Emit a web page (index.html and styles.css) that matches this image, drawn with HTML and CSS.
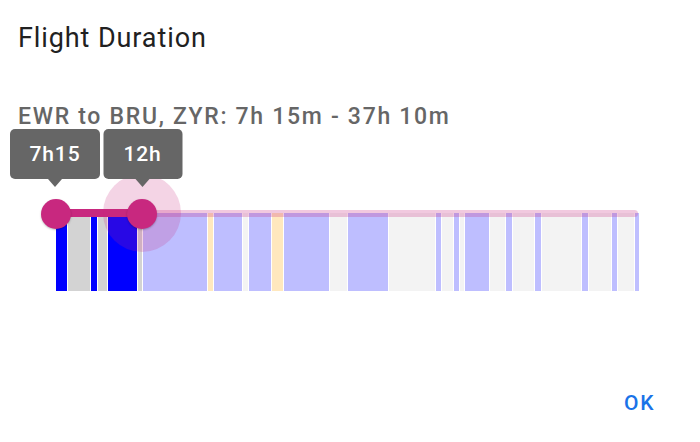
FILE: index.html
```html
<!DOCTYPE html>
<html>
<head>
  <title>Flight Duration</title>
  <link rel="stylesheet" href="styles.css">
</head>
<body>
  <div class="dialog">
    <h2 class="title">Flight Duration</h2>
    <p class="route">EWR to BRU, ZYR: 7h 15m - 37h 10m</p>

    <div class="range">
      <div class="bars">
        <div class="bar blue" style="width:12px"></div>
        <div class="bar gray" style="width:23px"></div>
        <div class="bar blue" style="width:7px"></div>
        <div class="bar gray" style="width:10px"></div>
        <div class="bar blue" style="width:30px"></div>
        <div class="bar gray" style="width:5px"></div>
        <div class="bar blue out" style="width:65px"></div>
        <div class="bar orange out" style="width:6px"></div>
        <div class="bar blue out" style="width:29px"></div>
        <div class="bar gray out" style="width:6px"></div>
        <div class="bar blue out" style="width:23px"></div>
        <div class="bar orange out" style="width:12px"></div>
        <div class="bar blue out" style="width:46px"></div>
        <div class="bar gray out" style="width:18px"></div>
        <div class="bar blue out" style="width:41px"></div>
        <div class="bar gray out" style="width:47px"></div>
        <div class="bar blue out" style="width:6px"></div>
        <div class="bar gray out" style="width:12px"></div>
        <div class="bar blue out" style="width:6px"></div>
        <div class="bar gray out" style="width:5px"></div>
        <div class="bar blue out" style="width:25px"></div>
        <div class="bar gray out" style="width:16px"></div>
        <div class="bar blue out" style="width:7px"></div>
        <div class="bar gray out" style="width:22px"></div>
        <div class="bar blue out" style="width:7px"></div>
        <div class="bar gray out" style="width:40px"></div>
        <div class="bar blue out" style="width:7px"></div>
        <div class="bar gray out" style="width:23px"></div>
        <div class="bar blue out" style="width:6px"></div>
        <div class="bar gray out" style="width:17px"></div>
        <div class="bar blue out last" style="width:4px"></div>
      </div>

      <!-- slider drawn over the histogram -->
      <div class="track"></div>
      <div class="track-active" style="width:86px"></div>
      <div class="halo" style="left:86px"></div>
      <div class="thumb" style="left:0px"></div>
      <div class="thumb" style="left:86px"></div>
      <div class="tip tip-min" style="left:0px">7h15</div>
      <div class="tip tip-max" style="left:86px">12h</div>
    </div>

    <div class="actions">
      <button class="okbtn">OK</button>
    </div>
  </div>
</body>
</html>
```

FILE: styles.css
```css
* {box-sizing: border-box}
body {
  margin: 0;
  background: #fff;
  font-family: Roboto, "Liberation Sans", sans-serif;
}
.dialog {padding: 22px 18px 0 18px;}

.title {
  margin: 0 0 51px 0;
  font-size: 27px;
  line-height: 32px;
  font-weight: 400;
  letter-spacing: 0.9px;
  color: #212121;
}
.route {
  margin: 0;
  font-size: 23px;
  line-height: 24px;
  font-weight: 500;
  letter-spacing: 1.7px;
  color: #666;
  white-space: nowrap;
}

.range {
  position: relative;
  margin-left: 38px;
  width: 583px;
  padding-top: 84px;
}
.bars {
  display: flex;
  height: 78px;
}
.bar {
  flex: none;
  height: 100%;
  border-right: 1px solid #fff;
}
.bar.last {border-right: none;}
.blue {background: #0000ff;}
.gray {background: #d3d3d3;}
.orange {background: #ffa500;}
.out {opacity: 0.25;}

.track {
  position: absolute;
  left: 0;
  top: 81px;
  width: 582px;
  height: 7px;
  border-radius: 4px;
  background: rgba(200, 40, 127, 0.25);
}
.track-active {
  position: absolute;
  left: 0;
  top: 80px;
  height: 8px;
  background: #c8287f;
}
.halo {
  position: absolute;
  top: 45px;
  width: 78px;
  height: 78px;
  margin-left: -39px;
  border-radius: 50%;
  background: rgba(200, 40, 127, 0.2);
}
.thumb {
  position: absolute;
  top: 70px;
  width: 30px;
  height: 30px;
  margin-left: -15px;
  border-radius: 50%;
  background: #c8287f;
  box-shadow: 0 1px 2px rgba(0, 0, 0, 0.25);
}

.tip {
  position: absolute;
  top: 0;
  height: 50px;
  transform: translateX(-50%);
  border-radius: 5px;
  background: #666;
  color: #fff;
  font-size: 21px;
  font-weight: 500;
  letter-spacing: 0.9px;
  line-height: 50px;
  text-align: center;
}
.tip::after {
  content: "";
  position: absolute;
  left: 50%;
  top: 50px;
  margin-left: -7px;
  border-left: 7px solid transparent;
  border-right: 7px solid transparent;
  border-top: 8px solid #666;
}
.tip-min {width: 90px; margin-left: -1px;}
.tip-max {width: 79px; margin-left: 0.5px;}

.actions {
  display: flex;
  justify-content: flex-end;
  margin-top: 94px;
  padding-right: 19px;
}
.okbtn {
  border: none;
  background: none;
  padding: 0 8px;
  height: 36px;
  font-family: Roboto, "Liberation Sans", sans-serif;
  font-size: 21px;
  font-weight: 500;
  letter-spacing: 1.6px;
  color: #1a73e8;
  cursor: pointer;
}
```
